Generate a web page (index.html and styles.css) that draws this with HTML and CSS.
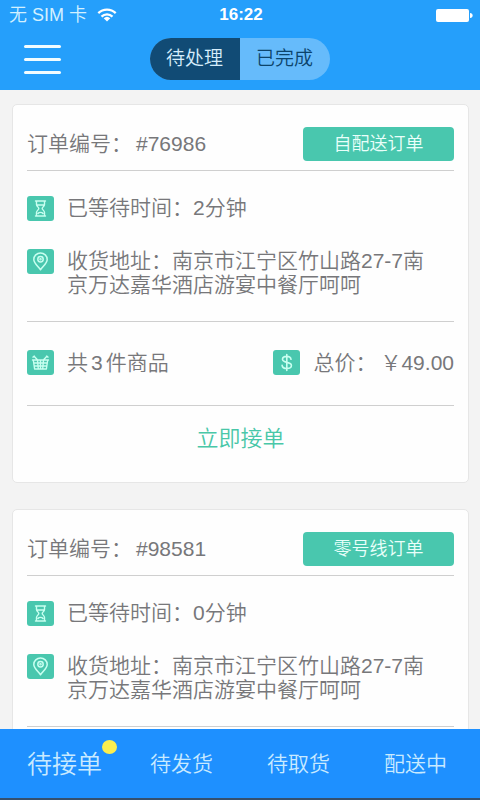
FILE: index.html
```html
<!DOCTYPE html>
<html lang="zh-CN">
<head>
<meta charset="utf-8">
<meta name="viewport" content="width=device-width, initial-scale=1">
<title>待处理订单</title>
<link rel="stylesheet" href="styles.css">
</head>
<body>
<svg class="defs" aria-hidden="true">
  <symbol id="i-time" viewBox="0 0 27 25">
    <g fill="none" stroke="currentColor" stroke-width="1.4" stroke-linecap="round" stroke-linejoin="round">
      <path d="M8.500 5h10M8.500 20h10M9.500 5v3.500c0 2 2.300 2.600 2.300 4s-2.300 2-2.300 4V20M17.500 5v3.500c0 2-2.300 2.600-2.300 4s2.300 2 2.300 4V20M10.500 9h6M11 17.500c1-1.500 4-1.500 5 0"/>
    </g>
  </symbol>
  <symbol id="i-place" viewBox="0 0 27 25">
    <g fill="none" stroke="currentColor" stroke-width="1.5" stroke-linejoin="round">
      <path d="M13.500 20.800C10.500 16.800 6.800 14 6.800 10.500a6.700 6.500 0 0 1 13.400 0c0 3.500-3.700 6.300-6.700 10.300z"/>
      <circle cx="13.500" cy="10.300" r="2.700"/>
      <circle cx="13.500" cy="10.300" r=".5"/>
    </g>
  </symbol>
  <symbol id="i-basket" viewBox="0 0 27 25">
    <g fill="none" stroke="currentColor" stroke-width="1.400" stroke-linecap="round" stroke-linejoin="round">
      <path d="M5.500 10h16M6.300 10l1.300 9h11.800l1.300-9M7 13h13M7.500 16h12M10.500 10l.8 9M13.500 10v9M16.500 10l-.8 9M7 6.300l3.500 3.500M20 6.300l-3.500 3.500M6 7.200l1.500-1M21 7.200l-1.500-1"/>
    </g>
  </symbol>
  <symbol id="i-price" viewBox="0 0 27 25">
    <g fill="none" stroke="currentColor" stroke-width="1.600" stroke-linecap="round">
      <path d="M18 9.300c-.3-1.900-2-2.900-4.200-2.900-2.500 0-4.300 1-4.300 2.900 0 4.300 8.900 1.900 8.900 6.200 0 2-2 3-4.500 3-2.700 0-4.600-1.100-4.800-3.200M13.800 4.500v16"/>
    </g>
  </symbol>
</svg>

<header class="top">
  <div class="status">
    <span class="carrier">无 SIM 卡
      <svg class="wifi" viewBox="0 0 20 14" aria-hidden="true">
        <g fill="none" stroke="currentColor" stroke-width="2.300">
          <path d="M1.300 5.200a12.500 12.500 0 0 1 17.400 0M4.500 8.600a8 8 0 0 1 11 0"/>
        </g>
        <path fill="currentColor" d="M10 13.500l-3.300-3.200a4.800 4.800 0 0 1 6.600 0z"/>
      </svg>
    </span>
    <span class="clock">16:22</span>
    <svg class="battery" viewBox="0 0 37 13" aria-hidden="true">
      <rect width="33" height="13" rx="2" fill="currentColor"/>
      <path fill="currentColor" d="M34 4c3.500 0 3.500 5 0 5z"/>
    </svg>
  </div>
  <div class="bar">
    <button class="menu" type="button" aria-label="菜单"><i></i><i></i><i></i></button>
    <div class="segment">
      <button class="seg active" type="button">待处理</button>
      <button class="seg" type="button">已完成</button>
    </div>
  </div>
</header>

<main class="orders">
  <article class="card">
    <div class="head">
      <span>订单编号：<span class="num">#76986</span></span>
      <button class="kind" type="button">自配送订单</button>
    </div>
    <div class="info">
      <div class="row"><svg class="icon"><use href="#i-time"/></svg><span>已等待时间：2分钟</span></div>
      <div class="row"><svg class="icon"><use href="#i-place"/></svg><span>收货地址：南京市江宁区竹山路27-7南京万达嘉华酒店游宴中餐厅呵呵</span></div>
    </div>
    <div class="sum">
      <div class="row"><svg class="icon"><use href="#i-basket"/></svg><span>共<span class="count">3</span>件商品</span></div>
      <div class="row"><svg class="icon"><use href="#i-price"/></svg><span>总价：<span class="num">￥49.00</span></span></div>
    </div>
    <button class="accept" type="button">立即接单</button>
  </article>

  <article class="card">
    <div class="head">
      <span>订单编号：<span class="num">#98581</span></span>
      <button class="kind" type="button">零号线订单</button>
    </div>
    <div class="info">
      <div class="row"><svg class="icon"><use href="#i-time"/></svg><span>已等待时间：0分钟</span></div>
      <div class="row"><svg class="icon"><use href="#i-place"/></svg><span>收货地址：南京市江宁区竹山路27-7南京万达嘉华酒店游宴中餐厅呵呵</span></div>
    </div>
  </article>
</main>

<nav class="tabs">
  <a class="tab current" href="#"><span class="label">待接单<i class="dot"></i></span></a>
  <a class="tab" href="#">待发货</a>
  <a class="tab" href="#">待取货</a>
  <a class="tab" href="#">配送中</a>
</nav>
</body>
</html>
```
FILE: styles.css
```css
* {
  box-sizing: border-box;
}

body {
  margin: 0;
  height: 100vh;
  display: flex;
  flex-direction: column;
  background: #f3f3f3;
  color: #77777a;
  font: 350 21px/24px "Liberation Sans", "Noto Sans CJK SC", sans-serif;
}

button {
  margin: 0;
  padding: 0;
  border: 0;
  background: none;
  color: inherit;
  font: inherit;
  cursor: pointer;
}

.defs {
  position: absolute;
  width: 0;
  height: 0;
}

.top {
  flex: none;
  background: #259ffb;
  color: #fff;
}

.status {
  display: grid;
  grid-template-columns: 1fr auto 1fr;
  align-items: center;
  height: 30px;
  padding: 0 7px 0 9px;
}

.carrier {
  display: flex;
  align-items: center;
  gap: 10px;
  font-size: 18px;
  color: #d3f0ff;
}

.wifi {
  width: 20px;
  height: 14px;
  color: #fff;
}

.clock {
  font-size: 17px;
  font-weight: 700;
}

.battery {
  justify-self: end;
  width: 37px;
  height: 13px;
}

.bar {
  display: grid;
  grid-template-columns: 1fr auto 1fr;
  align-items: center;
  padding: 8px 24px 10px;
}

.menu {
  display: flex;
  flex-direction: column;
  gap: 10px;
  width: 37px;
}

.menu i {
  height: 3px;
  border-radius: 2px;
  background: #f2fcff;
}

.segment {
  display: flex;
  overflow: hidden;
  border-radius: 21px;
  background: #66bbfb;
}

.seg {
  height: 42px;
  padding: 0 17px 0 16px;
  color: #0c446b;
  font-size: 19px;
}

.seg.active {
  background: #114b75;
  color: #d6edfb;
}

.orders {
  flex: 1;
  min-height: 0;
  overflow: hidden auto;
  scrollbar-width: none;
  padding: 14px 11px 14px 12px;
}

.card {
  margin-bottom: 26px;
  padding: 0 14px 20px;
  border: 1px solid #e6e6e6;
  border-radius: 5px;
  background: #fefefe;
}

.head,
.sum {
  display: flex;
  justify-content: space-between;
  align-items: center;
}

.head,
.info,
.sum {
  border-bottom: 1px solid #cfcfcf;
}

.head {
  padding: 22px 0 9px;
}

.num {
  margin-left: 4px;
}

.count {
  margin: 0 3px;
}

.kind {
  width: 151px;
  height: 34px;
  border-radius: 4px;
  background: #49c7ae;
  color: #e9fffa;
  font-size: 18px;
}

.info {
  display: grid;
  gap: 28px;
  padding: 25px 0 24px;
}

.row {
  display: flex;
  align-items: flex-start;
  gap: 13px;
}

.icon {
  flex: none;
  width: 27px;
  height: 25px;
  border-radius: 3px;
  background: #49c7ae;
  color: #c8fff0;
}

.info .row:last-child {
  padding-right: 20px;
}

.sum {
  padding: 28px 0 30px;
}

.sum .row {
  align-items: center;
}

.accept {
  width: 100%;
  height: 56px;
  padding-top: 10px;
  color: #49c7a8;
  font-size: 22px;
}

.tabs {
  flex: none;
  display: grid;
  grid-template-columns: repeat(4, 1fr);
  height: 71px;
  padding: 0 6px;
  border-bottom: 2px solid #35506e;
  background: #1e90ff;
}

.tab {
  display: grid;
  place-items: center;
  color: #c9eaff;
  text-decoration: none;
}

.label {
  position: relative;
}

.current {
  font-size: 25px;
}

.dot {
  position: absolute;
  top: -12px;
  right: -15px;
  width: 15px;
  height: 14px;
  border-radius: 50%;
  background: #fbee4f;
}
```
